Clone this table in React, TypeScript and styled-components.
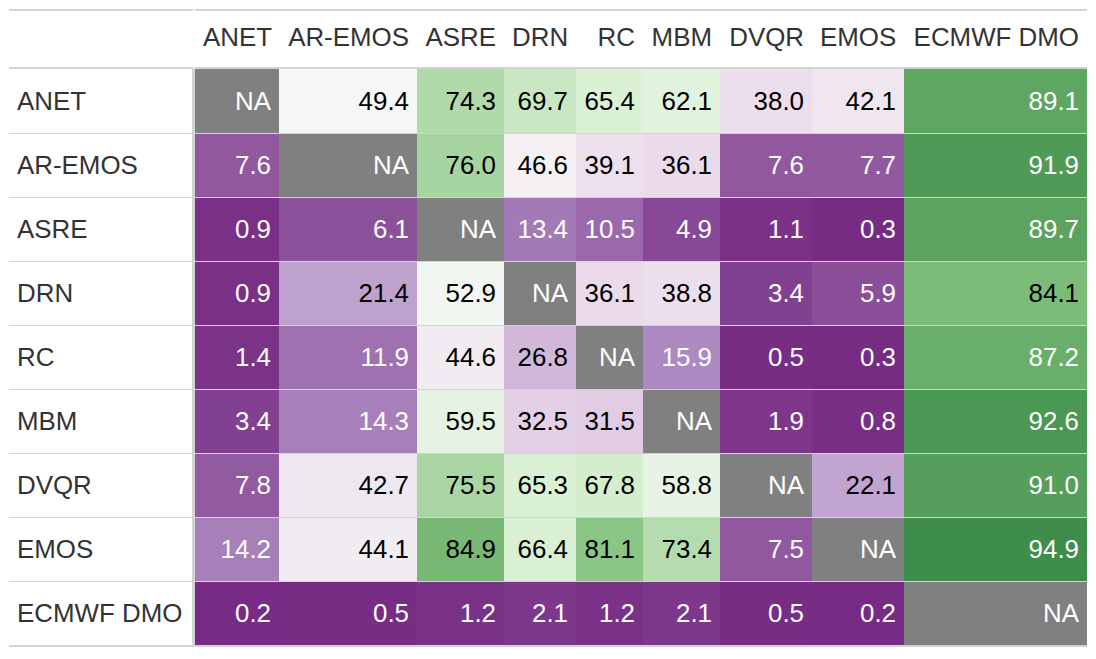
import React from "react";
import styled, { createGlobalStyle } from "styled-components";

const GlobalStyle = createGlobalStyle`
  html, body { margin: 0; padding: 0; background: #ffffff; }
  body { font-family: "Liberation Sans", Arial, sans-serif; }
  * { box-sizing: border-box; }
`;

const Page = styled.div`
  padding: 9px;
`;

const Table = styled.table`
  border-collapse: separate;
  border-spacing: 0;
  table-layout: fixed;
  width: 1078px;
  font-size: 25.9px;
  font-family: "Liberation Sans", Arial, sans-serif;
`;

const HeadCell = styled.th<{ $w: number; $stub?: boolean }>`
  width: ${(p) => p.$w}px;
  height: 60px;
  padding: 0 8px 3px 8px;
  border-top: 2px solid #d3d3d3;
  border-bottom: 2px solid #d3d3d3;
  border-right: ${(p) => (p.$stub ? "3px solid transparent" : "0")};
  color: #333333;
  font-weight: 400;
  text-align: right;
  vertical-align: middle;
  white-space: nowrap;
`;

const StubCell = styled.td<{ $first: boolean; $last: boolean }>`
  height: ${(p) => (p.$last ? 66 : 64)}px;
  padding: 0 8px;
  border-top: ${(p) => (p.$first ? "0" : "1px solid #d3d3d3")};
  border-bottom: ${(p) => (p.$last ? "2px solid #d3d3d3" : "0")};
  border-right: 3px solid #d3d3d3;
  color: #333333;
  text-align: left;
  vertical-align: middle;
  white-space: nowrap;
`;

const DataCell = styled.td<{ $bg: string; $fg: string; $first: boolean; $last: boolean }>`
  height: ${(p) => (p.$last ? 66 : 64)}px;
  padding: 0 8px;
  border-top: ${(p) => (p.$first ? "0" : "1px solid #d3d3d3")};
  border-bottom: ${(p) => (p.$last ? "2px solid #d3d3d3" : "0")};
  background: ${(p) => p.$bg};
  background-clip: padding-box;
  color: ${(p) => p.$fg};
  text-align: right;
  vertical-align: middle;
  white-space: nowrap;
`;

const NAMES = ["ANET", "AR-EMOS", "ASRE", "DRN", "RC", "MBM", "DVQR", "EMOS", "ECMWF DMO"];
const WIDTHS = [84, 138, 87, 72, 67, 77, 92, 92, 183];
const STUB_W = 186;

const N = null;
const DATA: (number | null)[][] = [
  [N, 49.4, 74.3, 69.7, 65.4, 62.1, 38.0, 42.1, 89.1],
  [7.6, N, 76.0, 46.6, 39.1, 36.1, 7.6, 7.7, 91.9],
  [0.9, 6.1, N, 13.4, 10.5, 4.9, 1.1, 0.3, 89.7],
  [0.9, 21.4, 52.9, N, 36.1, 38.8, 3.4, 5.9, 84.1],
  [1.4, 11.9, 44.6, 26.8, N, 15.9, 0.5, 0.3, 87.2],
  [3.4, 14.3, 59.5, 32.5, 31.5, N, 1.9, 0.8, 92.6],
  [7.8, 42.7, 75.5, 65.3, 67.8, 58.8, N, 22.1, 91.0],
  [14.2, 44.1, 84.9, 66.4, 81.1, 73.4, 7.5, N, 94.9],
  [0.2, 0.5, 1.2, 2.1, 1.2, 2.1, 0.5, 0.2, N],
];

// ColorBrewer PRGn, 7 classes, over the domain 0–100
const PAL = ["#762a83", "#af8dc3", "#e7d4e8", "#f7f7f7", "#d9f0d3", "#7fbf7b", "#1b7837"];

type Tri = [number, number, number];
const hexToRgb = (h: string): Tri => [
  parseInt(h.slice(1, 3), 16),
  parseInt(h.slice(3, 5), 16),
  parseInt(h.slice(5, 7), 16),
];
const XN = 0.95047, YN = 1, ZN = 1.08883;
const rgbToLab = ([r, g, b]: Tri): Tri => {
  const lin = (c: number) => {
    c /= 255;
    return c <= 0.04045 ? c / 12.92 : Math.pow((c + 0.055) / 1.055, 2.4);
  };
  const R = lin(r), G = lin(g), B = lin(b);
  const X = (0.4124 * R + 0.3576 * G + 0.1805 * B) / XN;
  const Y = (0.2126 * R + 0.7152 * G + 0.0722 * B) / YN;
  const Z = (0.0193 * R + 0.1192 * G + 0.9505 * B) / ZN;
  const f = (t: number) => (t > 0.008856 ? Math.cbrt(t) : 7.787 * t + 16 / 116);
  const fx = f(X), fy = f(Y), fz = f(Z);
  return [116 * fy - 16, 500 * (fx - fy), 200 * (fy - fz)];
};
const labToRgb = ([L, a, b]: Tri): Tri => {
  const fy = (L + 16) / 116;
  const fx = fy + a / 500;
  const fz = fy - b / 200;
  const inv = (t: number) => (t * t * t > 0.008856 ? t * t * t : (t - 16 / 116) / 7.787);
  const X = inv(fx) * XN, Y = inv(fy) * YN, Z = inv(fz) * ZN;
  const R = 3.2406 * X - 1.5372 * Y - 0.4986 * Z;
  const G = -0.9689 * X + 1.8758 * Y + 0.0415 * Z;
  const B = 0.0557 * X - 0.204 * Y + 1.057 * Z;
  const g = (c: number) => {
    const v = c <= 0.0031308 ? 12.92 * c : 1.055 * Math.pow(c, 1 / 2.4) - 0.055;
    return Math.max(0, Math.min(255, Math.round(v * 255)));
  };
  return [g(R), g(G), g(B)];
};
const LABS = PAL.map((h) => rgbToLab(hexToRgb(h)));

const scale = (v: number): string => {
  const t = Math.max(0, Math.min(1, v / 100)) * (LABS.length - 1);
  const i = Math.min(LABS.length - 2, Math.floor(t));
  const f = t - i;
  const a = LABS[i], b = LABS[i + 1];
  const lab: Tri = [a[0] + (b[0] - a[0]) * f, a[1] + (b[1] - a[1]) * f, a[2] + (b[2] - a[2]) * f];
  const [r, g, bb] = labToRgb(lab);
  return `rgb(${r}, ${g}, ${bb})`;
};

const textFor = (v: number | null) => (v === null || v < 20 || v >= 85 ? "#ffffff" : "#000000");

export default function App() {
  return (
    <Page>
      <GlobalStyle />
      <Table>
        <thead>
          <tr>
            <HeadCell $w={STUB_W} $stub />
            {NAMES.map((n, i) => (
              <HeadCell key={n} $w={WIDTHS[i]}>
                {n}
              </HeadCell>
            ))}
          </tr>
        </thead>
        <tbody>
          {DATA.map((row, r) => (
            <tr key={NAMES[r]}>
              <StubCell $first={r === 0} $last={r === DATA.length - 1}>
                {NAMES[r]}
              </StubCell>
              {row.map((v, c) => (
                <DataCell
                  key={c}
                  $first={r === 0}
                  $last={r === DATA.length - 1}
                  $bg={v === null ? "#808080" : scale(v)}
                  $fg={textFor(v)}
                >
                  {v === null ? "NA" : v.toFixed(1)}
                </DataCell>
              ))}
            </tr>
          ))}
        </tbody>
      </Table>
    </Page>
  );
}
